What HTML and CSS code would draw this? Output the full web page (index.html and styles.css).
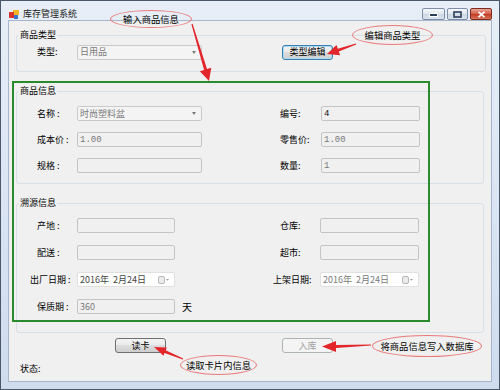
FILE: index.html
```html
<!DOCTYPE html>
<html>
  <head>
    <meta http-equiv="Content-Type" content="text/html; charset=utf-8"/>
    <title>库存管理系统</title>
    <link rel="stylesheet" href="styles.css">
  </head>
  <body>
  <div class="screen">
    <div class="window">
      <div class="titlebar">
        <svg class="app_icon" width="10" height="9" viewBox="0 0 10 9">
          <rect x="4" y="0" width="6" height="5" fill="#f4b425"/>
          <rect x="0" y="2" width="5" height="6" fill="#d9342b"/>
          <rect x="5" y="5" width="4" height="4" fill="#3b6fcf"/>
        </svg>
        <span class="title">库存管理系统</span>
        <div class="caption_buttons">
          <div class="cap_btn cap_min">
            <svg width="9" height="5" viewBox="0 0 9 5"><rect x="0.5" y="1.5" width="8" height="3" fill="#2c3e57" stroke="#fff" stroke-width="1"/></svg>
          </div>
          <div class="cap_btn cap_max">
            <svg width="9" height="7" viewBox="0 0 9 7"><rect x="1" y="1" width="7" height="5" fill="none" stroke="#2c3e57" stroke-width="1.6"/></svg>
          </div>
          <div class="cap_btn cap_close">
            <svg width="9" height="7" viewBox="0 0 9 7"><path d="M1.5 0.8 L7.5 6.2 M7.5 0.8 L1.5 6.2" stroke="#fff" stroke-width="1.8"/></svg>
          </div>
        </div>
      </div>

      <div class="client">
        <fieldset class="group group_type">
          <legend>商品类型</legend>
          <div class="type_row">
            <span class="label">类型:</span>
            <div class="box combo w125"><span class="value">日用品</span><span class="drop"></span></div>
            <button class="btn btn_focus">类型编辑</button>
          </div>
        </fieldset>

        <fieldset class="group group_info">
          <legend>商品信息</legend>
          <div class="form_grid info_grid">
            <span class="label">名称 :</span>
            <div class="box combo"><span class="value">时尚塑料盆</span><span class="drop"></span></div>
            <span class="label col4">编号:</span>
            <div class="box"><span class="value mono dark">4</span></div>

            <span class="label">成本价 :</span>
            <div class="box"><span class="value mono">1.00</span></div>
            <span class="label col4">零售价:</span>
            <div class="box"><span class="value mono">1.00</span></div>

            <span class="label">规格 :</span>
            <div class="box"></div>
            <span class="label col4">数量:</span>
            <div class="box"><span class="value mono">1</span></div>
          </div>
        </fieldset>

        <fieldset class="group group_trace">
          <legend>溯源信息</legend>
          <div class="form_grid trace_grid">
            <span class="label">产地 :</span>
            <div class="box"></div>
            <span class="label col4">仓库:</span>
            <div class="box"></div>

            <span class="label">配送 :</span>
            <div class="box"></div>
            <span class="label col4">超市:</span>
            <div class="box"></div>

            <span class="label shift">出厂日期 :</span>
            <div class="box date"><span class="value dark_gray">2016年&nbsp;&nbsp;2月24日</span>
              <svg class="cal" width="12" height="8" viewBox="0 0 12 8"><rect x="0.5" y="0.5" width="6" height="7" rx="1.5" fill="#ececec" stroke="#b8b8b8"/><path d="M8 3 L11 3 L9.5 4.8 Z" fill="#9a9a9a"/></svg>
            </div>
            <span class="label col4 shift">上架日期:</span>
            <div class="box date"><span class="value">2016年&nbsp;&nbsp;2月24日</span>
              <svg class="cal" width="12" height="8" viewBox="0 0 12 8"><rect x="0.5" y="0.5" width="6" height="7" rx="1.5" fill="#ececec" stroke="#b8b8b8"/><path d="M8 3 L11 3 L9.5 4.8 Z" fill="#9a9a9a"/></svg>
            </div>

            <span class="label">保质期 :</span>
            <div class="box"><span class="value">360</span></div>
            <span class="unit">天</span>
          </div>
        </fieldset>

        <div class="actions">
          <button class="btn">读卡</button>
          <button class="btn" disabled>入库</button>
        </div>

        <div class="status">状态:</div>
      </div>
    </div>

    <!-- annotations drawn over the screenshot -->
    <div class="mark_box"></div>

    <svg class="arrows" width="500" height="390" viewBox="0 0 500 390">
      <polygon points="191.4,24.2 204.1,69.9 199.8,71.2 209,81 211.3,67.8 207.0,69.1 192.6,23.8"/>
      <polygon points="355.8,43.4 337.8,48.7 336.5,44.9 327,54 340.1,55.3 338.8,51.5 356.2,44.6"/>
      <polygon points="183.2,358.5 165.7,350.2 166.8,347.4 154,347 163.4,355.8 164.5,353.0 182.8,359.6"/>
      <polygon points="371,344.5 336,345 336,341 322,346.5 336,352 336,348 371,345.5"/>
    </svg>

    <div class="bubble bubble_input">输入商品信息</div>
    <div class="bubble bubble_type">编辑商品类型</div>
    <div class="bubble bubble_read">读取卡片内信息</div>
    <div class="bubble bubble_save">将商品信息写入数据库</div>
  </div>
  </body>
</html>
```

FILE: styles.css
```css
body { margin: 0; font-family: "Noto Sans CJK SC", "Liberation Sans", sans-serif; font-size: 9px; color: #000; }

.screen { position: relative; width: 500px; height: 390px; overflow: hidden; }

/* window frame */
.window {
  width: 500px;
  height: 390px;
  box-sizing: border-box;
  border: 1px solid #4b586a;
  background: linear-gradient(#e7eef7, #cfdcee);
  display: flex;
  flex-direction: column;
}
.titlebar { display: flex; align-items: center; height: 19px; box-sizing: border-box; padding: 7px 7px 0 8px; }
.app_icon { display: block; }
.title { margin-left: 4px; line-height: 12px; color: #1b1b1b; }
.caption_buttons { margin-left: auto; display: flex; gap: 2px; }
.cap_btn {
  height: 12px;
  box-sizing: border-box;
  border: 1px solid #7d8fa8;
  border-radius: 2px;
  background: linear-gradient(#f6f8fb, #dfe6ef 50%, #cdd7e4 51%, #dbe3ee);
  display: flex;
  align-items: center;
  justify-content: center;
}
.cap_min { width: 23px; }
.cap_max { width: 21px; }
.cap_close { width: 22px; border-color: #7a2e22; background: linear-gradient(#eba597, #d45a46 50%, #c23a22 51%, #d8735c); }
.cap_btn svg { display: block; }

.client {
  flex: 1;
  margin: 0 7px 7px 7px;
  background: #f0f0f0;
  border: 1px solid #a7b6ca;
}

/* group boxes */
fieldset.group { border: 1px solid #d5dfe5; border-radius: 3px; min-width: 0; }
.group legend { padding: 0 1px; line-height: 12px; font-size: 9px; }
.group_type { margin: 8px 5px 0 7px; padding: 3px 0 11px 2px; }
.group_info { margin: 13px 7px 0 7px; padding: 9px 0 10px 2px; }
.group_trace { margin: 13px 7px 0 7px; padding: 9px 0 18px 2px; }

.type_row { display: flex; align-items: center; height: 16px; margin-left: 18px; }
.type_row .label { width: 40px; }
.type_row .btn { margin-left: 80px; }

.form_grid { display: grid; margin-left: 18px; grid-auto-rows: 15px; align-items: center; }
.info_grid { grid-template-columns: 40px 125px 78px 41px 99px; row-gap: 11px; }
.trace_grid { grid-template-columns: 40px 98px 105px 40px 99px; row-gap: 12px; }
.col4 { grid-column: 4; }

.label { white-space: nowrap; line-height: 12px; }
.label.shift { margin-left: -7px; }

/* inputs */
.box {
  height: 15px;
  box-sizing: border-box;
  border: 1px solid #c4c4c4;
  border-radius: 2px;
  background: #f0f0f0;
  display: flex;
  align-items: center;
  padding: 0 2px;
  color: #7a7a7a;
}
.w125 { width: 125px; }
.combo { background: #f4f4f4; border-color: #c9c9c9; }
.date { background: #fff; border-color: #e0e0e0; }
.value { flex: 1; white-space: nowrap; line-height: 12px; overflow: hidden; }
.mono { font-family: "Liberation Mono", monospace; font-size: 9px; }
.dark { color: #111; }
.dark_gray { color: #444; }
.drop { width: 0; height: 0; border-left: 2.5px solid transparent; border-right: 2.5px solid transparent; border-top: 3px solid #7a7a7a; margin-right: 3px; }
.cal { display: block; margin-right: 2px; }
.unit { padding-left: 7px; font-size: 10px; line-height: 12px; }

/* buttons */
.btn {
  width: 51px;
  height: 15px;
  box-sizing: border-box;
  padding: 0;
  border: 1px solid #707070;
  border-radius: 3px;
  background: linear-gradient(#f2f2f2, #ebebeb 50%, #dddddd 50%, #cfcfcf);
  font: inherit;
  line-height: 12px;
  color: #000;
}
.btn_focus { border-color: #3c7fb1; box-shadow: inset 0 0 0 1px #a9dcf6; }
.btn:disabled { border-color: #adb2b5; background: #f4f4f4; color: #a0a0a0; }

.actions { display: flex; margin: 5px 0 0 106px; }
.actions .btn + .btn { margin-left: 116px; }
.status { margin: 10px 0 0 11px; line-height: 12px; }

/* annotations */
.mark_box {
  position: absolute;
  left: 12px;
  top: 81px;
  width: 418px;
  height: 241px;
  box-sizing: border-box;
  border: 2px solid #2b8a2b;
}
.arrows { position: absolute; left: 0; top: 0; fill: #e3262b; }
.bubble {
  position: absolute;
  box-sizing: border-box;
  border: 1px solid #ea7b7b;
  border-radius: 50%;
  display: flex;
  align-items: center;
  justify-content: center;
  font-size: 9.3px;
  line-height: 12px;
  white-space: nowrap;
}
.bubble_input { left: 110px; top: 10px; width: 82px; height: 18px; }
.bubble_type { left: 352px; top: 25px; width: 81px; height: 20px; }
.bubble_read { left: 180px; top: 355px; width: 77px; height: 20px; }
.bubble_save { left: 372px; top: 335px; width: 110px; height: 22px; }
```
